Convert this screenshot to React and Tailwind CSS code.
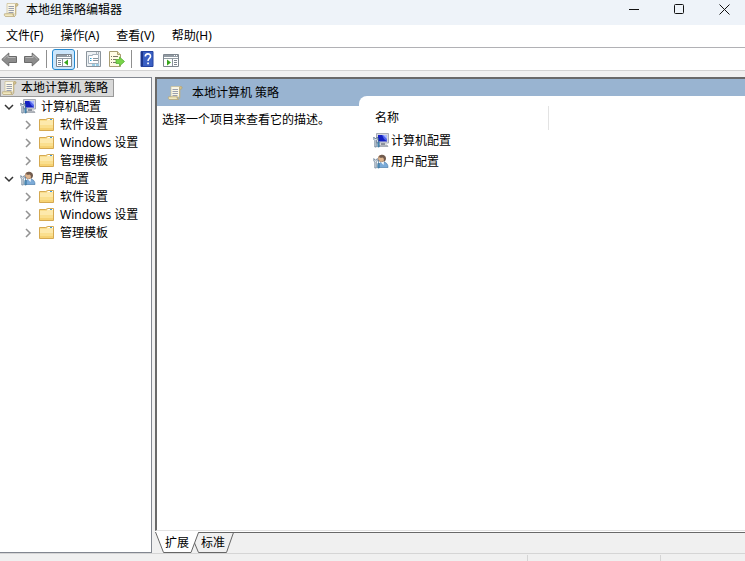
import React from "react";

function ScrollIcon() {
  return (
    <svg className="h-4 w-4 shrink-0" viewBox="0 0 16 16" aria-hidden="true">
      <path d="M4 1.500h10v2l-1.500 1V12H4z" fill="#fbf7e6" stroke="#c9bc92" strokeWidth=".7" />
      <path d="M12.500 2.500c0-1.300 2.600-1.300 2.600.2 0 1.200-1.200 1.700-2.600 1.500z" fill="#d6c48d" stroke="#a8976a" strokeWidth=".6" />
      <path d="M1.500 11.800h8.700v1c0 1 .6 1.700 1.400 1.700H3c-1.500 0-2-1.300-1.500-2.700z" fill="#f2e9bf" stroke="#b3a272" strokeWidth=".7" />
      <path d="M10.200 11.800c0 3.200 2.600 3.200 2.600.2V4" fill="none" stroke="#c2b07c" />
      <path d="M5.500 4.500h5.500M5.500 6.500h5.500M5.500 8.500h5.500M5.500 10.500h5" stroke="#9ba0ae" />
    </svg>
  );
}

function FolderIcon() {
  return (
    <svg className="h-4 w-4 shrink-0" viewBox="0 0 16 16" aria-hidden="true">
      <path d="M.5 2.500h6.300l1.700-1h6v12H.5z" fill="#f9dd8d" stroke="#d0a044" strokeWidth=".9" />
      <path d="M9 2h5v1.500H8z" fill="#fff" />
      <path d="M11 2h2v1.300h-2z" fill="#3d9be0" />
      <path d="M1 4h7l1-1h5v5H1z" fill="#fde9ab" />
      <path d="M1 8h13v3H1z" fill="#fadf8e" />
      <path d="M1 11h13v2H1z" fill="#f6d273" />
    </svg>
  );
}

function ComputerIcon() {
  return (
    <svg className="h-4 w-4 shrink-0" viewBox="0 0 16 16" aria-hidden="true">
      <path d="M3.500.500h12v9.500h-12z" fill="#d5d8df" stroke="#a5aab5" />
      <path d="M5 2h9v6.500H5z" fill="#1420c0" />
      <path d="M9 2h5v6.500L11 6z" fill="#5265ea" />
      <path d="M10 2h4v4z" fill="#a8b6ff" />
      <path d="M8 10h4v2H8z" fill="#8d939e" />
      <path d="M6 12h8l1 1.500H6z" fill="#c5c8ce" stroke="#858b95" strokeWidth=".6" />
      <path d="M.8 4v2.500l1 1V14h1.500V7.500l1-1V4l-1 1.500H1.800z" fill="#dce5ed" stroke="#526a85" strokeWidth=".7" />
      <path d="M5.500 5v4M4.800 9h1.400v5H4.800z" fill="#4b95c2" stroke="#3c6f97" strokeWidth=".7" />
    </svg>
  );
}

function UserIcon() {
  return (
    <svg className="h-4 w-4 shrink-0" viewBox="0 0 16 16" aria-hidden="true">
      <path d="M5 13.500c0-3 1.500-5.500 5-5.500s5 2.500 5 5.500z" fill="#7cabd8" stroke="#4e7fae" strokeWidth=".7" />
      <path d="M7.500 8h3.500l-.5 3z" fill="#f5f8fb" />
      <circle cx="8.500" cy="4.500" r="3.300" fill="#dfb58f" stroke="#9c7557" strokeWidth=".6" />
      <path d="M6 3C6.500-.3 13 0 13 4.300c0 2-.8 3-2 3.700.2-2.300-.4-3.700-1.200-4.400C8.500 4 7 4 6 3z" fill="#705b4e" />
      <path d="M.8 4.500V7l1 1v6h1.500V8l1-1V4.500L3.300 6H1.800z" fill="#dfe7ed" stroke="#61778e" strokeWidth=".7" />
      <path d="M5.500 6v3.500M4.800 9.500h1.400V14H4.800z" fill="#4f9bc8" stroke="#3c6f97" strokeWidth=".7" />
    </svg>
  );
}

function ArrowIcon({ flipped = false }) {
  return (
    <svg className={flipped ? "h-4 w-4 -scale-x-100" : "h-4 w-4"} viewBox="0 0 16 16" aria-hidden="true">
      <path d="M.8 8.500l7-6.500v3.500h7.700v6H7.800V15z" fill="#8c8c8c" stroke="#6a6a6a" />
      <path d="M2.500 8L6.900 4v2.500h7.600" fill="none" stroke="#b5b5b5" />
    </svg>
  );
}

function PaneIcon({ flipped = false }) {
  return (
    <svg className="h-4 w-4" viewBox="0 0 16 16" aria-hidden="true">
      <path d="M.5 2.500h15v12H.5z" fill="#fff" stroke="#7e868e" />
      <path d="M1 3h14v2H1z" fill="#929ba3" />
      <path d="M11 3.500h1M13 3.500h1" stroke="#fff" />
      <path d="M1 6.500h14" stroke="#929ba3" />
      {flipped ? (
        <>
          <path d="M9.500 7v7" stroke="#8a939b" />
          <path d="M11 8.500h3M11 10.500h3M11 12.500h3" stroke="#7e868e" />
          <path d="M4 7.500v6l4-3z" fill="#39a51c" />
        </>
      ) : (
        <>
          <path d="M6.500 7v7" stroke="#8a939b" />
          <path d="M2 8.500h3M2 10.500h3M2 12.500h3" stroke="#7e868e" />
          <path d="M12 7.500v6l-4-3z" fill="#39a51c" />
        </>
      )}
    </svg>
  );
}

function PropertiesIcon() {
  return (
    <svg className="h-4 w-4" viewBox="0 0 16 16" aria-hidden="true">
      <path d="M.5.5h14v15H.5z" fill="#edf1f4" stroke="#8b949c" />
      <path d="M10 2h1M12 2h1" stroke="#66727c" />
      <path d="M2.500 4.500h4v-1h6v9h-10z" fill="#fff" stroke="#a5b1bb" />
      <path d="M4 7.500h1.500M4 9.500h1.500" stroke="#2ea4d8" />
      <path d="M7 7.500h5M7 9.500h5" stroke="#8b949c" />
      <path d="M6 14h3M10 14h3" stroke="#45a9d4" />
    </svg>
  );
}

function ExportIcon() {
  return (
    <svg className="h-4 w-4" viewBox="0 0 16 16" aria-hidden="true">
      <path d="M.5.5h8l3 3v12H.5z" fill="#fffbe6" stroke="#a99d72" />
      <path d="M8.500.5v3h3" fill="#e9ddae" stroke="#a99d72" />
      <path d="M2 5.500h1M2 8.500h1M2 11.500h1M4 5.500h5M4 8.500h3M4 11.500h3" stroke="#7b7668" />
      <path d="M7 8.500h3.500V6l5 4.500-5 4.500v-2.500H7z" fill="#79d44a" stroke="#55b035" strokeWidth=".8" />
    </svg>
  );
}

function HelpIcon() {
  return (
    <svg className="h-4 w-4" viewBox="0 0 16 16" aria-hidden="true">
      <path d="M2 .5h12v15H2z" fill="#3a60c4" stroke="#2443a0" />
      <path d="M2 1h2v14H2z" fill="#1d378c" />
      <path d="M6.300 5.500C6.300 2 11.500 2 11.500 5.200 11.500 7.500 9 7.500 9 10" fill="none" stroke="#fff" strokeWidth="1.600" />
      <path d="M8.200 11.500h1.700v1.700H8.200z" fill="#fff" />
    </svg>
  );
}

function Chevron({ open = false }) {
  return (
    <svg className="h-3 w-3 shrink-0" viewBox="0 0 12 12" fill="none" aria-hidden="true">
      {open ? (
        <path d="M2 4l4 4 4-4" stroke="#333" strokeWidth="1.500" />
      ) : (
        <path d="M4 2l4 4-4 4" stroke="#929292" strokeWidth="1.500" />
      )}
    </svg>
  );
}

const icons = { computer: ComputerIcon, user: UserIcon };
const sections = [
  { name: "计算机配置", icon: "computer" },
  { name: "用户配置", icon: "user" },
];
const folders = ["软件设置", "Windows 设置", "管理模板"];
const menus = ["文件(F)", "操作(A)", "查看(V)", "帮助(H)"];

function TitleBar() {
  return (
    <header className="flex h-[25px] shrink-0 items-start justify-between bg-[#eef3f9]">
      <div className="flex h-5 items-center gap-[7px] pl-[3px]">
        <ScrollIcon />
        <h1>本地组策略编辑器</h1>
      </div>
      <div className="flex h-[18px] items-center gap-[33px] pr-[15px]">
        <button aria-label="最小化">
          <svg className="h-3 w-3" viewBox="0 0 12 12"><path d="M1 6.500h10" stroke="#111" /></svg>
        </button>
        <button aria-label="最大化">
          <svg className="h-3 w-3" viewBox="0 0 12 12"><rect x="1.500" y="1.500" width="9" height="9" rx="1" fill="none" stroke="#111" /></svg>
        </button>
        <button aria-label="关闭">
          <svg className="h-3 w-3" viewBox="0 0 12 12"><path d="M1.500 1.500l10 10M11.500 1.500l-10 10" stroke="#111" /></svg>
        </button>
      </div>
    </header>
  );
}

function Separator() {
  return <span className="h-[18px] w-px bg-[#8f8f8f]" />;
}

function Toolbar() {
  return (
    <div role="toolbar" aria-label="工具栏" className="flex h-[23px] shrink-0 items-center border-b border-[#d2d2d2] bg-white pl-px">
      <button aria-label="后退" className="mr-[7px]"><ArrowIcon /></button>
      <button aria-label="前进" className="mr-1.5"><ArrowIcon flipped /></button>
      <Separator />
      <button aria-label="显示/隐藏控制台树" aria-pressed="true" className="ml-[5px] mr-0.5 flex h-[21px] w-[23px] items-center justify-center rounded-[3px] border border-[#2589cf] bg-[#cce6fb] pt-px">
        <PaneIcon />
      </button>
      <Separator />
      <button aria-label="属性" className="ml-2 mr-[7px]"><PropertiesIcon /></button>
      <button aria-label="导出列表" className="mr-1.5"><ExportIcon /></button>
      <Separator />
      <button aria-label="帮助" className="mx-[7px]"><HelpIcon /></button>
      <button aria-label="显示/隐藏操作窗格" className="ml-px pt-px"><PaneIcon flipped /></button>
    </div>
  );
}

function Tree() {
  return (
    <nav aria-label="控制台树" className="w-[152px] shrink-0 border-r border-t border-b border-[#828790] bg-white pt-px">
      <button className="flex h-[18px] items-center gap-1 border border-[#999] bg-[#d9d9d9] pr-[5px]">
        <ScrollIcon />
        <span>本地计算机 策略</span>
      </button>
      <ul className="pt-px">
        {sections.map(({ name, icon }) => {
          const Icon = icons[icon];
          return (
            <li key={name}>
              <button aria-expanded="true" className="flex h-[18px] items-center pl-[3px]">
                <Chevron open />
                <span className="ml-[5px] mr-[5px]"><Icon /></span>
                <span>{name}</span>
              </button>
              <ul>
                {folders.map((folder) => (
                  <li key={folder}>
                    <button aria-expanded="false" className="flex h-[18px] items-center pl-[22px]">
                      <Chevron />
                      <span className="ml-[5px] mr-[5px]"><FolderIcon /></span>
                      <span>{folder}</span>
                    </button>
                  </li>
                ))}
              </ul>
            </li>
          );
        })}
      </ul>
    </nav>
  );
}

function ViewTabs() {
  return (
    <div className="relative h-[22px] shrink-0">
      <div className="h-0.5 border-b border-[#696969] bg-white" />
      <svg className="absolute left-0 top-0 h-[22px] w-20" viewBox="0 0 80 22" aria-hidden="true">
        <path d="M0 0H44L36 21.500H8L0 1z" fill="#fff" />
        <path d="M.5 1L8.500 21.500H36L43.500 1.500H78.500L71.500 21.500H43.500L39.500 12" fill="none" stroke="#666" />
      </svg>
      <div role="tablist" className="absolute left-0 top-0 flex h-6 items-center">
        <button role="tab" aria-selected="true" className="w-11">扩展</button>
        <button role="tab" aria-selected="false" className="w-7">标准</button>
      </div>
    </div>
  );
}

function Details() {
  return (
    <main className="flex min-w-0 flex-1 flex-col">
      <div className="flex min-h-0 flex-1 border-l-2 border-t-2 border-b border-l-[#696969] border-t-[#696969] border-b-[#e3e3e3] bg-white">
        <section className="w-[202px] shrink-0">
          <div className="flex h-[27px] items-center gap-[9px] bg-[#99b4d1] pl-[10px]">
            <ScrollIcon />
            <h2>本地计算机 策略</h2>
          </div>
          <p className="px-[5px] pt-[5px]">选择一个项目来查看它的描述。</p>
        </section>
        <section className="min-w-0 flex-1">
          <div className="h-[27px] bg-[#99b4d1] pt-[17px]">
            <div className="h-full rounded-tl-lg bg-white" />
          </div>
          <table className="w-[190px] border-collapse text-left">
            <thead>
              <tr className="h-6">
                <th className="border-r border-[#e3e3e3] p-0 pl-4 font-normal">名称</th>
              </tr>
            </thead>
            <tbody>
              {sections.map(({ name, icon }) => {
                const Icon = icons[icon];
                return (
                  <tr key={name} className="h-[21px]">
                    <td className="p-0 pl-3.5">
                      <span className="flex items-center gap-0.5"><Icon />{name}</span>
                    </td>
                  </tr>
                );
              })}
            </tbody>
          </table>
        </section>
      </div>
      <ViewTabs />
    </main>
  );
}

export default function App() {
  return (
    <div className="flex h-screen flex-col overflow-hidden bg-[#f0f0f0] font-['Noto_Sans','Noto_Sans_CJK_SC',sans-serif] text-xs leading-[18px] text-black">
      <TitleBar />
      <nav aria-label="菜单" className="flex h-[23px] shrink-0 items-center gap-[17px] border-b border-[#b1b1b5] bg-white pl-1.5">
        {menus.map((menu) => <button key={menu}>{menu}</button>)}
      </nav>
      <Toolbar />
      <div className="flex min-h-0 flex-1 gap-[3px] pt-1.5">
        <Tree />
        <Details />
      </div>
      <footer className="flex h-2 shrink-0 justify-end border-t border-[#d5d5d5] pt-px">
        <span className="w-[133px] border-l border-[#d5d5d5]" />
        <span className="w-[85px] border-l border-[#d5d5d5]" />
      </footer>
    </div>
  );
}
